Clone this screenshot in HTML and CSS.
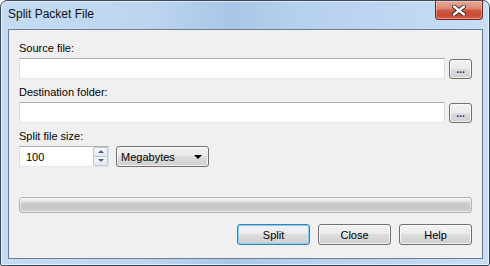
FILE: index.html
```html
<!DOCTYPE html>
<html lang="en">

<head>
  <meta charset="UTF-8" />
  <title>Split Packet File</title>
  <link rel="stylesheet" href="styles.css">
</head>

<body>
  <div class="window">
    <div class="titlebar">
      <span class="title">Split Packet File</span>
      <div class="close-btn">
        <svg width="14" height="11" viewBox="0 0 14 11">
          <path d="M2 1.5 L12 9.5 M12 1.5 L2 9.5" stroke="#3b2420" stroke-width="4.2" stroke-linecap="round" />
          <path d="M2 1.5 L12 9.5 M12 1.5 L2 9.5" stroke="#fff" stroke-width="2.4" stroke-linecap="round" />
        </svg>
      </div>
    </div>

    <div class="client">
      <label class="caption">Source file:</label>
      <div class="path-row">
        <input class="textbox" type="text" />
        <button class="browse">...</button>
      </div>

      <label class="caption">Destination folder:</label>
      <div class="path-row">
        <input class="textbox" type="text" />
        <button class="browse">...</button>
      </div>

      <label class="caption">Split file size:</label>
      <div class="size-row">
        <div class="spinbox">
          <input class="spin-value" type="text" value="100" />
          <div class="spin-arrows">
            <div class="spin-btn up"></div>
            <div class="spin-btn down"></div>
          </div>
        </div>
        <div class="combo">
          <span>Megabytes</span>
          <span class="combo-arrow"></span>
        </div>
      </div>

      <div class="progress"></div>

      <div class="buttons">
        <button class="btn default">Split</button>
        <button class="btn">Close</button>
        <button class="btn">Help</button>
      </div>
    </div>
  </div>
</body>

</html>
```

FILE: styles.css
```css
body {
  margin: 0;
  background: #fff;
  font-family: "Liberation Sans", Arial, sans-serif;
  font-size: 11px;
  color: #000;
}

.window {
  box-sizing: border-box;
  width: 490px;
  height: 266px;
  border: 1px solid #3e4a57;
  border-radius: 7px 7px 2px 2px;
  padding: 0 6px 6px 7px;
  display: flex;
  flex-direction: column;
  background: linear-gradient(to right, #c4dbf3 0%, #bdd6f0 30%, #a8c6e6 47%, #b5d0ed 60%, #c7def6 100%);
  box-shadow: inset 0 0 0 1px rgba(255, 255, 255, 0.55);
}

.titlebar {
  height: 28px;
  display: flex;
  justify-content: space-between;
  align-items: flex-start;
}

.title {
  margin-top: 6px;
  font-size: 12px;
  line-height: 15px;
  color: #111;
}

.close-btn {
  box-sizing: border-box;
  width: 48px;
  height: 19px;
  border: 1px solid #6b2a21;
  border-top: none;
  border-radius: 0 0 4px 4px;
  background: linear-gradient(#e9a898 0%, #dc8c78 40%, #c9553d 55%, #c84a33 80%, #d9634a 100%);
  box-shadow: inset 0 0 0 1px rgba(255, 220, 210, 0.45);
  display: flex;
  align-items: center;
  justify-content: center;
}

.client {
  flex: 1;
  border: 1px solid #6e7c8b;
  background: #f0f0f0;
  padding: 12px 10px 0 10px;
  display: flex;
  flex-direction: column;
}

.caption {
  display: block;
  line-height: 13px;
  height: 13px;
  margin-bottom: 3px;
}

.path-row {
  display: flex;
  gap: 4px;
  margin-bottom: 7px;
}

.textbox {
  box-sizing: border-box;
  flex: 1;
  height: 21px;
  margin: 0;
  padding: 0 4px;
  background: #fff;
  border: 1px solid #dbdfe6;
  border-top-color: #abadb3;
  border-bottom-color: #e3e9ef;
  font: inherit;
  outline: none;
}

.browse {
  box-sizing: border-box;
  width: 23px;
  height: 20px;
  margin: 1px 0 0 0;
  padding: 0 0 3px 0;
  border: 1px solid #707070;
  border-radius: 3px;
  background: linear-gradient(#f2f2f2 0%, #ebebeb 50%, #dddddd 50%, #cfcfcf 100%);
  box-shadow: inset 0 0 0 1px rgba(255, 255, 255, 0.7);
  font: inherit;
  font-weight: bold;
  font-size: 10px;
  line-height: 10px;
  color: #1c2a78;
  display: flex;
  align-items: flex-end;
  justify-content: center;
}

.size-row {
  display: flex;
  gap: 7px;
}

.spinbox {
  box-sizing: border-box;
  width: 90px;
  height: 21px;
  background: #fff;
  border: 1px solid #dbdfe6;
  border-top-color: #abadb3;
  border-bottom-color: #e3e9ef;
  display: flex;
}

.spin-value {
  flex: 1;
  min-width: 0;
  border: none;
  margin: 0;
  padding: 0 0 0 6px;
  font: inherit;
  background: transparent;
  outline: none;
}

.spin-arrows {
  width: 15px;
  display: flex;
  flex-direction: column;
}

.spin-btn {
  box-sizing: border-box;
  flex: 1;
  border: 1px solid #b9c6d6;
  background: linear-gradient(#f6f9fc, #e3eaf2);
  position: relative;
}

.spin-btn.up {
  border-radius: 2px 2px 0 0;
}

.spin-btn.down {
  border-radius: 0 0 2px 2px;
  border-top: none;
}

.spin-btn::after {
  content: "";
  position: absolute;
  left: 4px;
  top: 2px;
  border-left: 3px solid transparent;
  border-right: 3px solid transparent;
}

.spin-btn.up::after {
  border-bottom: 3px solid #4d6185;
}

.spin-btn.down::after {
  border-top: 3px solid #4d6185;
}

.combo {
  box-sizing: border-box;
  width: 93px;
  height: 21px;
  border: 1px solid #707070;
  border-radius: 3px;
  background: linear-gradient(#f2f2f2 0%, #ebebeb 50%, #dddddd 50%, #cfcfcf 100%);
  box-shadow: inset 0 0 0 1px rgba(255, 255, 255, 0.7);
  padding: 0 5px 0 4px;
  display: flex;
  align-items: center;
  justify-content: space-between;
}

.combo-arrow {
  width: 0;
  height: 0;
  border-left: 4px solid transparent;
  border-right: 4px solid transparent;
  border-top: 4px solid #000;
  margin-right: 1px;
}

.progress {
  box-sizing: border-box;
  height: 16px;
  margin-top: 30px;
  border: 1px solid #b2b2b2;
  border-radius: 3px;
  background: linear-gradient(#f4f4f4 0%, #e3e3e3 25%, #cbcbcb 35%, #c6c6c6 65%, #d3d3d3 100%);
  box-shadow: inset 0 0 0 1px rgba(255, 255, 255, 0.5);
}

.buttons {
  margin-top: 11px;
  display: flex;
  justify-content: flex-end;
  gap: 8px;
}

.btn {
  box-sizing: border-box;
  width: 73px;
  height: 21px;
  margin: 0;
  padding: 0;
  border: 1px solid #707070;
  border-radius: 3px;
  background: linear-gradient(#f2f2f2 0%, #ebebeb 50%, #dddddd 50%, #cfcfcf 100%);
  box-shadow: inset 0 0 0 1px rgba(255, 255, 255, 0.7);
  font: inherit;
  color: #000;
}

.btn.default {
  border-color: #3c7fb1;
  box-shadow: inset 0 0 0 1px #7fd0f5;
}
```
